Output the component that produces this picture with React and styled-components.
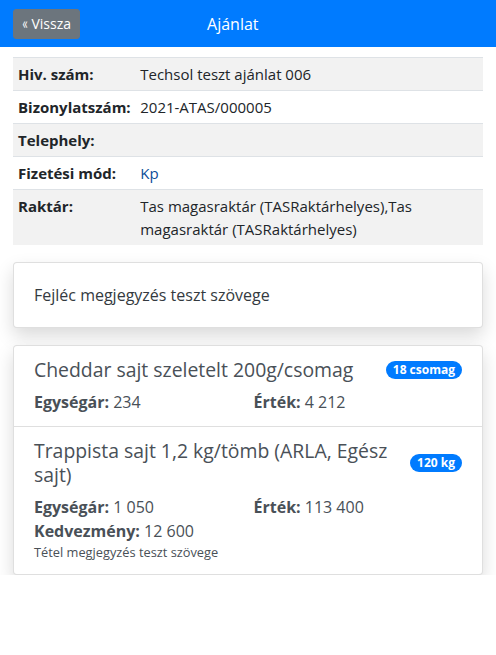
import React from "react";
import styled, { createGlobalStyle } from "styled-components";

const Global = createGlobalStyle`
  html, body { margin: 0; padding: 0; background: #fff; }
  body {
    font-family: "Open Sans", "Noto Sans", "Liberation Sans", sans-serif;
    font-size: 16px;
    line-height: 1.5;
    color: #212529;
  }
  * { box-sizing: border-box; }
`;

const Header = styled.header`
  height: 47px;
  background: #007bff;
  display: flex;
  align-items: center;
  padding: 0 13px;
  gap: 127px;
`;

const BackButton = styled.button`
  display: flex;
  align-items: center;
  gap: 4px;
  background: #6c757d;
  color: #fff;
  border: 1px solid #6c757d;
  border-radius: 3px;
  font-family: inherit;
  font-size: 14px;
  line-height: 1.5;
  padding: 3px 8px 3px 9px;
  height: 30px;
  cursor: pointer;
`;

const Chevrons = styled.span`
  font-size: 17px;
  line-height: 1;
  letter-spacing: -1px;
  transform: scaleX(0.6);
  display: inline-block;
  margin: -2px -1px 0 -2px;
`;

const Title = styled.h1`
  margin: 0;
  font-size: 16px;
  font-weight: 400;
  color: #fff;
`;

const Main = styled.main`
  padding: 10px 13px 0;
  display: flex;
  flex-direction: column;
  gap: 17px;
`;

const Table = styled.table`
  width: 100%;
  border-collapse: collapse;
  font-size: 15px;
  line-height: 1.5;
  color: #212529;
`;

const Row = styled.tr`
  background: ${(p) => (p.$striped ? "#f2f2f2" : "#fff")};
  border-top: 1px solid #dee2e6;
`;

const Label = styled.th`
  text-align: left;
  vertical-align: top;
  font-weight: 700;
  width: 122px;
  padding: 4.8px 4.8px 4.8px 5px;
  white-space: nowrap;
`;

const Value = styled.td`
  vertical-align: top;
  padding: 4.8px;
  color: ${(p) => (p.$accent ? "#0b4d99" : "#212529")};
`;

const Card = styled.div`
  background: #fff;
  border: 1px solid rgba(0, 0, 0, 0.125);
  border-radius: 4px;
  box-shadow: 0 8px 18px rgba(0, 0, 0, 0.15);
`;

const CardBody = styled.div`
  padding: 20px;
  color: #343a40;
`;

const Item = styled.div`
  padding: 12px 20px;
  color: #495057;
  & + & {
    border-top: 1px solid rgba(0, 0, 0, 0.125);
  }
`;

const ItemHead = styled.div`
  display: flex;
  align-items: center;
  justify-content: space-between;
  gap: 16px;
  margin-bottom: 8px;
`;

const ItemTitle = styled.h5`
  margin: 0;
  font-size: 19.4px;
  font-weight: 500;
  line-height: 24px;
  color: #495057;
`;

const Badge = styled.span`
  flex: none;
  background: #007bff;
  color: #fff;
  font-size: 12px;
  font-weight: 700;
  line-height: 1;
  padding: 3px 7px;
  border-radius: 10rem;
  white-space: nowrap;
`;

const Fields = styled.div`
  display: grid;
  grid-template-columns: 1fr 1fr;
  column-gap: 11px;
`;

const Field = styled.div``;

const Note = styled.small`
  display: block;
  font-size: 12.8px;
  line-height: 1.5;
`;

const rows = [
  ["Hiv. szám:", "Techsol teszt ajánlat 006"],
  ["Bizonylatszám:", "2021-ATAS/000005"],
  ["Telephely:", ""],
  ["Fizetési mód:", "Kp", true],
  ["Raktár:", "Tas magasraktár (TASRaktárhelyes),Tas magasraktár (TASRaktárhelyes)"],
];

const items = [
  {
    name: "Cheddar sajt szeletelt 200g/csomag",
    qty: "18 csomag",
    fields: [["Egységár:", "234"], ["Érték:", "4 212"]],
  },
  {
    name: "Trappista sajt 1,2 kg/tömb (ARLA, Egész sajt)",
    qty: "120 kg",
    fields: [["Egységár:", "1 050"], ["Érték:", "113 400"], ["Kedvezmény:", "12 600"]],
    note: "Tétel megjegyzés teszt szövege",
  },
];

export default function App() {
  return (
    <>
      <Global />
      <Header>
        <BackButton>
          <Chevrons>«</Chevrons>
          Vissza
        </BackButton>
        <Title>Ajánlat</Title>
      </Header>
      <Main>
        <Table>
          <tbody>
            {rows.map(([l, v, accent], i) => (
              <Row key={l} $striped={i % 2 === 0}>
                <Label>{l}</Label>
                <Value $accent={accent}>{v}</Value>
              </Row>
            ))}
          </tbody>
        </Table>
        <Card>
          <CardBody>Fejléc megjegyzés teszt szövege</CardBody>
        </Card>
        <Card>
          {items.map((it) => (
            <Item key={it.name}>
              <ItemHead>
                <ItemTitle>{it.name}</ItemTitle>
                <Badge>{it.qty}</Badge>
              </ItemHead>
              <Fields>
                {it.fields.map(([k, v]) => (
                  <Field key={k}>
                    <b>{k}</b> {v}
                  </Field>
                ))}
              </Fields>
              {it.note && <Note>{it.note}</Note>}
            </Item>
          ))}
        </Card>
      </Main>
    </>
  );
}
